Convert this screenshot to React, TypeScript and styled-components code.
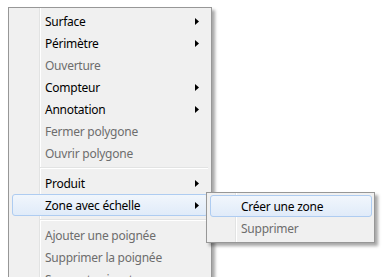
import styled, { createGlobalStyle, css } from "styled-components";

import type React from "react";

/* -----------------------------------------------
 * Menu contextuel (style Windows 7)
 * ----------------------------------------------- */

const GlobalStyle = createGlobalStyle`
  html, body {
    margin: 0;
    padding: 0;
    background: #fff;
    overflow: hidden;
  }
  body {
    width: 385px;
    height: 277px;
    font-family: "Segoe UI", "Noto Sans", "Open Sans", sans-serif;
    font-size: 12px;
    letter-spacing: -0.25px;
  }
`;

type Entry = { label: string; disabled?: boolean; sub?: boolean; hot?: boolean } | "sep";

const mainItems: Entry[] = [
  { label: "Surface", sub: true },
  { label: "Périmètre", sub: true },
  { label: "Ouverture", disabled: true },
  { label: "Compteur", sub: true },
  { label: "Annotation", sub: true },
  { label: "Fermer polygone", disabled: true },
  { label: "Ouvrir polygone", disabled: true },
  "sep",
  { label: "Produit", sub: true },
  { label: "Zone avec échelle", sub: true, hot: true },
  "sep",
  { label: "Ajouter une poignée", disabled: true },
  { label: "Supprimer la poignée", disabled: true },
  { label: "Sommet suivant", disabled: true },
];

const subItems: Entry[] = [
  { label: "Créer une zone", hot: true },
  { label: "Supprimer", disabled: true },
];

const App: React.FC = () => {
  return (
    <>
      <GlobalStyle />
      <Page>
        <MenuPanel $gutter={31}>
          {renderItems(mainItems, 32)}
          <SubPanel $gutter={29}>{renderItems(subItems, 30)}</SubPanel>
        </MenuPanel>
      </Page>
    </>
  );
};

const renderItems = (items: Entry[], indent: number) =>
  items.map((it, i) =>
    it === "sep" ? (
      <Separator key={i} $indent={indent} />
    ) : (
      <Item key={i} $hot={it.hot} $disabled={it.disabled} $indent={indent}>
        <span>{it.label}</span>
        {it.sub && <Arrow />}
      </Item>
    ),
  );

const Arrow: React.FC = () => (
  <ArrowSvg width="4" height="7" viewBox="0 0 4 7">
    <path d="M0 0 L4 3.5 L0 7 Z" fill="#000" />
  </ArrowSvg>
);

const Page = styled.div`
  display: flex;
  align-items: flex-start;
  padding: 7px 0 0 8px;
`;

const panel = css<{ $gutter: number }>`
  box-sizing: border-box;
  border: 1px solid #979797;
  background-color: #f0f0f0;
  background-image: linear-gradient(
    to right,
    transparent ${(p) => p.$gutter - 1}px,
    #e2e3e3 ${(p) => p.$gutter - 1}px,
    #e2e3e3 ${(p) => p.$gutter}px,
    #ffffff ${(p) => p.$gutter}px,
    #ffffff ${(p) => p.$gutter + 1}px,
    transparent ${(p) => p.$gutter + 1}px
  );
  box-shadow: 3px 3px 3px rgba(0, 0, 0, 0.35);
  display: flex;
  flex-direction: column;
`;

const MenuPanel = styled.div<{ $gutter: number }>`
  ${panel}
  position: relative;
  width: 204px;
  padding: 2px 3px 30px;
`;

const SubPanel = styled.div<{ $gutter: number }>`
  ${panel}
  position: absolute;
  left: 197px;
  top: 184px;
  width: 169px;
  padding: 2px 2px 3px 3px;
`;

const Item = styled.div<{ $hot?: boolean; $disabled?: boolean; $indent: number }>`
  box-sizing: border-box;
  height: 22px;
  display: flex;
  align-items: center;
  justify-content: space-between;
  padding: 0 8px 0 ${(p) => p.$indent}px;
  border: 1px solid transparent;
  border-radius: 3px;
  color: ${(p) => (p.$disabled ? "#6d6d6d" : "#000")};
  white-space: nowrap;
  ${(p) =>
    p.$hot &&
    css`
      border-color: #aeccf1;
      background: linear-gradient(to bottom, #f1f6fc, #e0ebf9);
    `}
`;

const Separator = styled.div<{ $indent: number }>`
  height: 8px;
  margin-left: ${(p) => p.$indent - 4}px;
  background: linear-gradient(
    to bottom,
    transparent 3px,
    #e2e3e3 3px,
    #e2e3e3 4px,
    #ffffff 4px,
    #ffffff 5px,
    transparent 5px
  );
`;

const ArrowSvg = styled.svg`
  display: block;
  flex: none;
`;

export default App;
